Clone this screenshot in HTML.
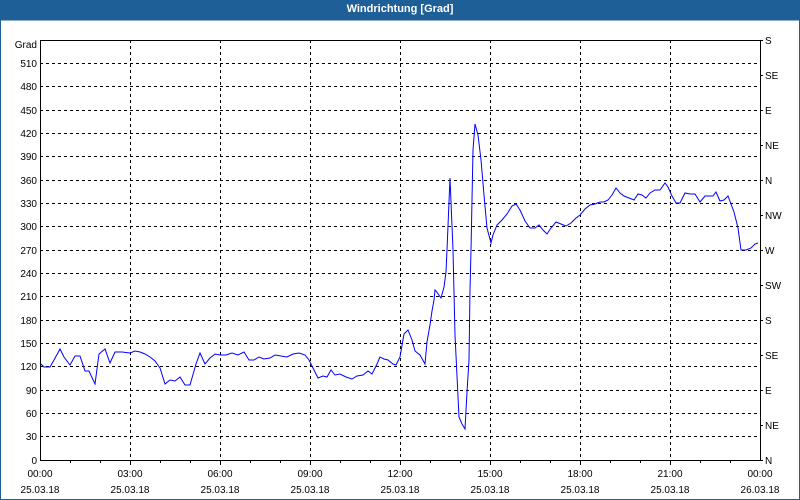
<!DOCTYPE html>
<html><head><meta charset="utf-8"><style>
html,body{margin:0;padding:0;background:#fff}
body{width:800px;height:500px;overflow:hidden;position:relative;font-family:"Liberation Sans",sans-serif}
.tb{position:absolute;left:0;top:0;width:800px;height:20px;background:#1e5f98;color:#fff;font-size:11px;font-weight:bold;text-align:center;line-height:19px}
</style></head><body>
<div class="tb">Windrichtung [Grad]</div>
<svg width="800" height="500" style="position:absolute;left:0;top:0" font-family="Liberation Sans, sans-serif" font-size="10">
<rect x="0.5" y="20" width="799" height="479.5" fill="none" stroke="#1e5f98"/>
<g stroke="#000" stroke-dasharray="3,3" shape-rendering="crispEdges">
<path d="M40 63.5H760M40 86.5H760M40 110.5H760M40 133.5H760M40 156.5H760M40 180.5H760M40 203.5H760M40 226.5H760M40 250.5H760M40 273.5H760M40 296.5H760M40 320.5H760M40 343.5H760M40 366.5H760M40 390.5H760M40 413.5H760M40 436.5H760"/>
<path d="M130.5 40V460M220.5 40V460M310.5 40V460M400.5 40V460M490.5 40V460M580.5 40V460M670.5 40V460"/>
</g>
<g stroke="#000" shape-rendering="crispEdges" fill="none">
<path d="M40.5 40V460.5H760.5V40M40 40.5H760"/>
<path d="M70.5 461v2M100.5 461v2M160.5 461v2M190.5 461v2M250.5 461v2M280.5 461v2M340.5 461v2M370.5 461v2M430.5 461v2M460.5 461v2M520.5 461v2M550.5 461v2M610.5 461v2M640.5 461v2M700.5 461v2M730.5 461v2M130.5 461v4M220.5 461v4M310.5 461v4M400.5 461v4M490.5 461v4M580.5 461v4M670.5 461v4"/>
<path d="M760 40.5h3M760 75.5h3M760 110.5h3M760 145.5h3M760 180.5h3M760 215.5h3M760 250.5h3M760 285.5h3M760 320.5h3M760 355.5h3M760 390.5h3M760 425.5h3M760 460.5h3"/>
</g>
<g text-anchor="end" fill="#000">
<text x="37" y="48">Grad</text>
<text x="37" y="67">510</text><text x="37" y="90">480</text><text x="37" y="114">450</text><text x="37" y="137">420</text><text x="37" y="160">390</text><text x="37" y="184">360</text><text x="37" y="207">330</text><text x="37" y="230">300</text><text x="37" y="254">270</text><text x="37" y="277">240</text><text x="37" y="300">210</text><text x="37" y="324">180</text><text x="37" y="347">150</text><text x="37" y="370">120</text><text x="37" y="394">90</text><text x="37" y="417">60</text><text x="37" y="440">30</text><text x="37" y="464">0</text>
</g>
<g fill="#000">
<text x="765" y="44">S</text><text x="765" y="79">SE</text><text x="765" y="114">E</text><text x="765" y="149">NE</text><text x="765" y="184">N</text><text x="765" y="219">NW</text><text x="765" y="254">W</text><text x="765" y="289">SW</text><text x="765" y="324">S</text><text x="765" y="359">SE</text><text x="765" y="394">E</text><text x="765" y="429">NE</text><text x="765" y="464">N</text>
</g>
<g text-anchor="middle" fill="#000">
<text x="40" y="477">00:00</text><text x="130" y="477">03:00</text><text x="220" y="477">06:00</text><text x="310" y="477">09:00</text><text x="400" y="477">12:00</text><text x="490" y="477">15:00</text><text x="580" y="477">18:00</text><text x="670" y="477">21:00</text><text x="760" y="477">00:00</text>
<text x="40" y="493">25.03.18</text><text x="130" y="493">25.03.18</text><text x="220" y="493">25.03.18</text><text x="310" y="493">25.03.18</text><text x="400" y="493">25.03.18</text><text x="490" y="493">25.03.18</text><text x="580" y="493">25.03.18</text><text x="670" y="493">25.03.18</text><text x="760" y="493">26.03.18</text>
</g>
<polyline fill="none" stroke="#0000ff" stroke-width="1" points="40,363 44,367 50,367 54,360 60,349 64,357 70,365 75,356 80,356 85,371 89,371 95,384 99,354 105,349 110,363 115,352 122,352 130,353 135,351 140,352 145,354 150,357 155,361 160,368 165,384 170,380 175,381 180,377 185,385 190,385 196,364 200,353 205,364 210,358 215,354 220,355 226,355 232,353 238,355 244,352 249,360 254,360 259,357 264,359 270,358 275,355 281,356 287,357 293,354 299,353 305,355 309,360 313,368 318,378 323,376 327,377 331,370 335,375 340,374 346,377 352,379 357,376 363,375 368,371 372,374 377,364 380,357 384,359 388,360 393,364 396,365 400,357 404,334 408,330 412,340 415,351 420,355 425,364 427,342 430,325 432,311 434,300 435,290 436,291 441,298 444,287 446,272 447,250 450,178 453,250 455,335 459,417 462,424 465,429 467,392 469,360 470,290 471,250 473,150 475,124 478,135 481,160 484,195 487,228 491,243 493,235 497,225 502,220 507,214 512,206 516,204 520,210 525,221 530,228 535,228 539,225 543,230 547,234 551,228 556,222 561,224 566,226 571,223 576,218 580,215 585,209 590,205 595,204 600,202 604,202 608,200 612,195 616,188 620,193 624,196 629,198 634,200 638,194 642,195 646,198 650,193 655,190 660,190 665,183 668,187 672,196 676,203 680,203 685,193 690,194 695,194 700,202 705,196 710,196 713,196 716,192 720,201 724,200 728,196 731,204 734,212 738,228 741,250 746,250 751,248 755,244 758,243"/>
</svg>
</body></html>
